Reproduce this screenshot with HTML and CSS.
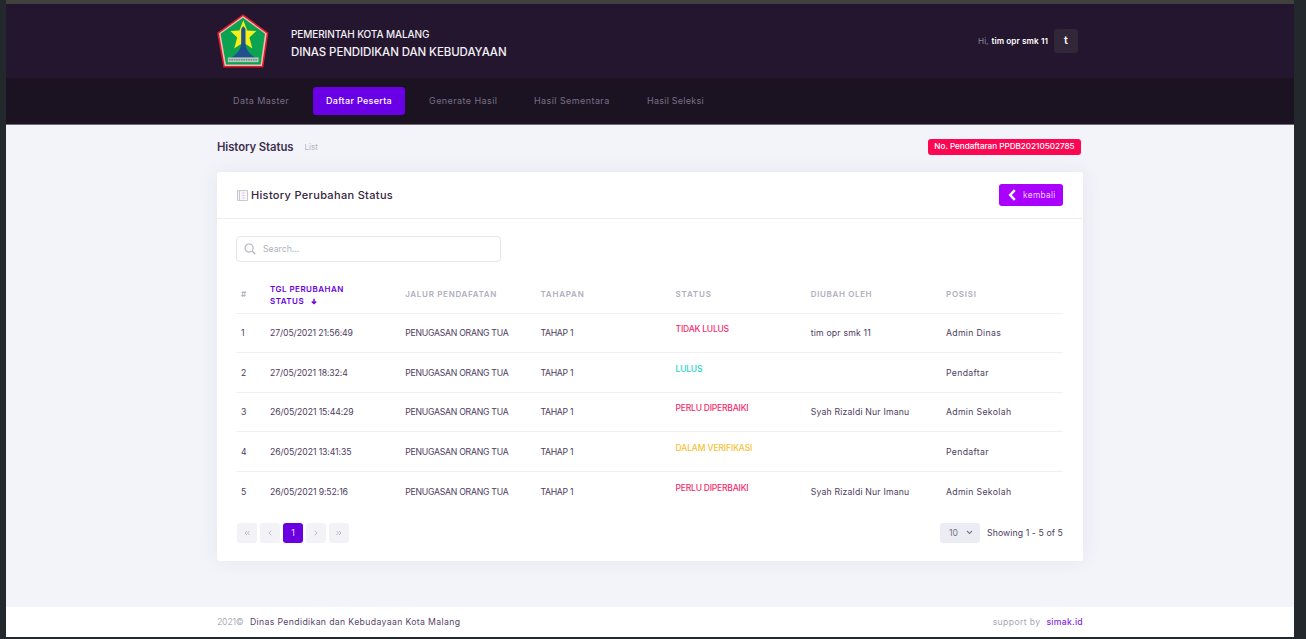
FILE: index.html
```html
<!DOCTYPE html>
<html lang="id">
<head>
<meta charset="utf-8">
<title>History Status</title>
<link rel="stylesheet" href="styles.css">
</head>
<body>
<div class="page">
  <header class="header">
    <div class="container header-row">
      <svg class="logo" viewBox="0 0 52 54">
        <path d="M26 1.2 50.6 19 45.6 52.8H7L1 19Z" fill="#f3b9b4" stroke="#d91c2b" stroke-width="1.6"/>
        <path d="M26 3.8 48 19.8 43.6 50.4H9L3.6 19.8Z" fill="#0ba34f"/>
        <path d="M26.3 6.2 30.2 16.6 39.4 16.9 32.4 23.4 35.4 34.6 26.3 28.6 17.2 34.6 20.2 23.4 13.4 16.9 22.4 16.6Z" fill="#f5ee19"/>
        <path d="M26.3 12 28.5 15V30.5C29.8 38 34 40.5 39.4 44.6V47H13V44.6C18.5 40.5 23 38 24.2 30.5V15Z" fill="#21508f"/>
        <path d="M10.8 43.4H41.6V48.2H10.8Z" fill="#b4c9be"/>
        <path d="M12 45.8H40.5" stroke="#6f8d89" stroke-width="1.4" stroke-dasharray="1.6 .8"/>
      </svg>
      <div class="brand">
        <div class="brand-city">PEMERINTAH KOTA MALANG</div>
        <div class="brand-office">DINAS PENDIDIKAN DAN KEBUDAYAAN</div>
      </div>
      <div class="user"><span class="user-hi">Hi,</span><span class="user-name">tim opr smk 11</span><span class="avatar">t</span></div>
    </div>
  </header>
  <nav class="nav">
    <div class="container nav-row">
      <a class="nav-link nav-master">Data Master</a>
      <a class="nav-link nav-active">Daftar Peserta</a>
      <a class="nav-link nav-generate">Generate Hasil</a>
      <a class="nav-link nav-interim">Hasil Sementara</a>
      <a class="nav-link nav-selection">Hasil Seleksi</a>
    </div>
  </nav>
  <main class="container main">
    <div class="subheader">
      <h1 class="title">History Status</h1>
      <span class="crumb">List</span>
      <span class="reg-badge">No. Pendaftaran PPDB20210502785</span>
    </div>
    <section class="card">
      <div class="card-head">
        <svg class="card-icon" viewBox="0 0 11 11"><path d="M.5.5H10.5V10.5H.5ZM2.5.5V10.5" fill="#f7f6fa" stroke="#cbc6d2"/><path d="M5.5 3H7.5M5.5 5.5H7.5M5.5 8H7.5" stroke="#cbc6d2"/></svg>
        <h2 class="card-title">History Perubahan Status</h2>
        <a class="back"><svg class="back-icon" viewBox="0 0 8 12"><path d="M6.8 1.2 2.2 6 6.8 10.8" fill="none" stroke="#fff" stroke-width="2.5"/></svg><span>kembali</span></a>
      </div>
      <div class="card-body">
        <div class="search"><svg class="search-icon" viewBox="0 0 13 13"><circle cx="5.5" cy="5.5" r="4.4" fill="none" stroke="#b3b1bb" stroke-width="1.2"/><path d="M8.8 8.8 12 12" stroke="#b3b1bb" stroke-width="1.5"/></svg><span>Search...</span></div>
        <div class="table">
          <div class="row head">
            <span class="num">#</span>
            <span class="sorted">TGL PERUBAHAN<br>STATUS <svg class="sort-icon" viewBox="0 0 6 7"><path d="M3 .8V6M.8 3.4 3 5.6 5.2 3.4" fill="none" stroke="#6a00e0" stroke-width="1.4"/></svg></span>
            <span class="head-path">JALUR PENDAFATAN</span><span>TAHAPAN</span><span>STATUS</span><span class="head-by">DIUBAH OLEH</span><span>POSISI</span>
          </div>
          <div class="row"><span class="num">1</span><span class="date">27/05/2021 21:56:49</span><span class="path">PENUGASAN ORANG TUA</span><span class="stage">TAHAP 1</span><span class="status danger">TIDAK LULUS</span><span class="by">tim opr smk 11</span><span class="position">Admin Dinas</span></div>
          <div class="row"><span class="num">2</span><span class="date">27/05/2021 18:32:4</span><span class="path">PENUGASAN ORANG TUA</span><span class="stage">TAHAP 1</span><span class="status success">LULUS</span><span class="by"></span><span class="position">Pendaftar</span></div>
          <div class="row"><span class="num">3</span><span class="date">26/05/2021 15:44:29</span><span class="path">PENUGASAN ORANG TUA</span><span class="stage">TAHAP 1</span><span class="status danger">PERLU DIPERBAIKI</span><span class="by">Syah Rizaldi Nur Imanu</span><span class="position">Admin Sekolah</span></div>
          <div class="row"><span class="num">4</span><span class="date">26/05/2021 13:41:35</span><span class="path">PENUGASAN ORANG TUA</span><span class="stage">TAHAP 1</span><span class="status warning">DALAM VERIFIKASI</span><span class="by"></span><span class="position">Pendaftar</span></div>
          <div class="row"><span class="num">5</span><span class="date">26/05/2021 9:52:16</span><span class="path">PENUGASAN ORANG TUA</span><span class="stage">TAHAP 1</span><span class="status danger">PERLU DIPERBAIKI</span><span class="by">Syah Rizaldi Nur Imanu</span><span class="position">Admin Sekolah</span></div>
        </div>
        <div class="pager">
          <a class="page-btn"><svg class="chev" viewBox="0 0 8 8"><path d="M4 2 2 4 4 6M6.5 2 4.5 4 6.5 6"/></svg></a>
          <a class="page-btn"><svg class="chev" viewBox="0 0 8 8"><path d="M5.2 1.7 2.9 4 5.2 6.3"/></svg></a>
          <a class="page-btn current">1</a>
          <a class="page-btn"><svg class="chev" viewBox="0 0 8 8"><path d="M2.8 1.7 5.1 4 2.8 6.3"/></svg></a>
          <a class="page-btn"><svg class="chev" viewBox="0 0 8 8"><path d="M1.5 2 3.5 4 1.5 6M4 2 6 4 4 6"/></svg></a>
          <span class="size">10<svg class="size-icon" viewBox="0 0 7 5"><path d="M1 1 3.5 3.5 6 1" fill="none" stroke="#7e7987" stroke-width="1.1"/></svg></span>
          <span class="showing">Showing 1 - 5 of 5</span>
        </div>
      </div>
    </section>
  </main>
  <footer class="footer">
    <div class="container footer-row"><span class="year">2021©</span><span class="owner">Dinas Pendidikan dan Kebudayaan Kota Malang</span><span class="support">support by</span><span class="vendor">simak.id</span></div>
  </footer>
</div>
</body>
</html>
```
FILE: styles.css
```css
* { box-sizing: border-box; }
body {
  margin: 0;
  height: 639px;
  padding: 0 12px 2px 6px;
  background: #23282d;
  font: 8.7px/12px Inter, "Open Sans", sans-serif;
  color: #4e3d60;
  overflow: hidden;
}
.page {
  height: 637px;
  border-top: 4px solid #41413f;
  background: #f2f4f9;
  display: flex;
  flex-direction: column;
}
.container { width: 866px; margin-left: 211px; }
.header { height: 74px; background: #23162e; }
.header-row { display: flex; align-items: center; height: 100%; }
.logo { width: 52px; height: 54px; }
.brand { margin-left: 22px; padding-top: 4px; color: #f3f0f6; font-weight: 500; }
.brand-city { font-size: 10px; line-height: 17px; letter-spacing: -.1px; }
.brand-office { font-size: 11.5px; line-height: 18px; letter-spacing: -.1px; }
.user { margin-left: auto; margin-right: 5px; display: flex; align-items: center; white-space: nowrap; font-size: 8.2px; }
.user-hi { color: #8d8699; margin-right: 3px; }
.user-name { color: #fff; font-weight: 600; margin-right: 6px; letter-spacing: .08px; }
.avatar { width: 24px; height: 24px; border-radius: 3px; background: #322739; color: #fff; font-size: 11px; font-weight: 600; line-height: 23px; text-align: center; }
.nav { height: 47px; background: #1b1322; border-bottom: 1px solid #6e6975; }
.nav-row { display: flex; padding: 9px 0 0 3px; }
.nav-link { height: 28px; padding: 0 13px; line-height: 27px; color: #777086; font-size: 9px; letter-spacing: .42px; white-space: nowrap; }
.nav-master { width: 82px; margin-right: 11px; }
.nav-active { width: 92px; margin-right: 11px; border-radius: 3px; background: #6a00e6; color: #fff; font-weight: 500; letter-spacing: .3px; }
.nav-generate { width: 94px; margin-right: 11px; }
.nav-interim { width: 103px; margin-right: 10px; }
.nav-selection { letter-spacing: .24px; }
.main { flex: 1; }
.subheader { height: 47px; display: flex; align-items: center; padding: 0 2px 4px 0; }
.title { margin: 0; font-size: 11.3px; font-weight: 600; letter-spacing: -.08px; color: #402f50; }
.crumb { margin-left: 11px; padding-top: 1px; color: #b7b4c1; font-size: 8.2px; }
.reg-badge { margin-left: auto; width: 153px; height: 16px; border-radius: 3px; background: #fd0753; color: #fff; font-size: 8.2px; font-weight: 500; line-height: 15px; letter-spacing: -.04px; text-align: center; white-space: nowrap; }
.card { height: 389px; border-radius: 3px; background: #fff; box-shadow: 0 0 20px rgba(82, 63, 105, .07); }
.card-head { height: 47px; display: flex; align-items: center; padding: 0 20px; border-bottom: 1px solid #eeeef4; }
.card-icon { width: 11px; height: 11px; }
.card-title { margin: 0 0 0 3px; font-size: 11px; font-weight: 500; letter-spacing: .33px; color: #35243f; }
.back { margin-left: auto; width: 64px; height: 22px; display: flex; align-items: center; gap: 7px; padding-left: 9px; border-radius: 3px; background: #a900ff; color: #ead0ff; font-size: 8.4px; letter-spacing: .3px; }
.back-icon { width: 8px; height: 12px; }
.card-body { padding: 17px 20px 0 19px; }
.search { width: 265px; height: 26px; display: flex; align-items: center; gap: 7px; padding-left: 7px; border: 1px solid #e5e6ee; border-radius: 4px; color: #b3b0bc; font-size: 8.7px; }
.search-icon { width: 12px; height: 12px; }
.table { margin-top: 12.4px; }
.row { height: 39.5px; display: grid; grid-template-columns: 34px repeat(6, 135.2px); align-items: center; border-bottom: 1px solid #f0eff5; white-space: nowrap; width: 827px; overflow: hidden; }
.row:last-child { border-bottom: 0; }
.num { padding-left: 5px; }
.date { letter-spacing: -.1px; }
.path { letter-spacing: -.26px; }
.stage { letter-spacing: -.3px; }
.by { letter-spacing: .18px; }
.position { letter-spacing: .33px; }
.head { color: #b1aebd; font-size: 8px; font-weight: 600; letter-spacing: .8px; line-height: 12px; }
.head-path { letter-spacing: .69px; }
.head-by { letter-spacing: .64px; }
.sorted { color: #6a00e0; letter-spacing: .47px; padding-top: 2px; }
.sort-icon { width: 6px; height: 7px; margin-left: 4px; vertical-align: -1px; }
.status { font-weight: 500; padding-bottom: 8px; font-size: 8.5px; letter-spacing: -.2px; }
.danger { color: #f42c6c; }
.success { color: #22d5c7; }
.warning { color: #f8bf35; letter-spacing: -.12px; }
.pager { margin-top: 11.6px; padding-left: 1px; display: flex; align-items: center; gap: 3px; }
.page-btn { width: 20px; height: 20px; display: flex; align-items: center; justify-content: center; border-radius: 3px; background: #f3f3f7; }
.current { background: #6a00e0; color: #e6d5ff; }
.chev { width: 8px; height: 8px; fill: none; stroke: #bbb9c7; stroke-width: 1; }
.size { width: 40px; height: 20px; margin-left: auto; display: flex; align-items: center; justify-content: space-between; padding: 0 7px 0 9px; border-radius: 3px; background: #ebecf4; color: #777181; }
.size-icon { width: 7px; height: 5px; }
.showing { margin-left: 4px; letter-spacing: .1px; }
.footer { height: 30px; background: #fff; }
.footer-row { height: 100%; display: flex; align-items: center; }
.year { color: #b1aebb; width: 33px; letter-spacing: -.2px; }
.owner { color: #59466a; letter-spacing: .35px; }
.support { margin-left: auto; color: #aaa6b6; letter-spacing: .35px; }
.vendor { margin-left: 6px; color: #8429e7; font-weight: 500; letter-spacing: .25px; }
```
